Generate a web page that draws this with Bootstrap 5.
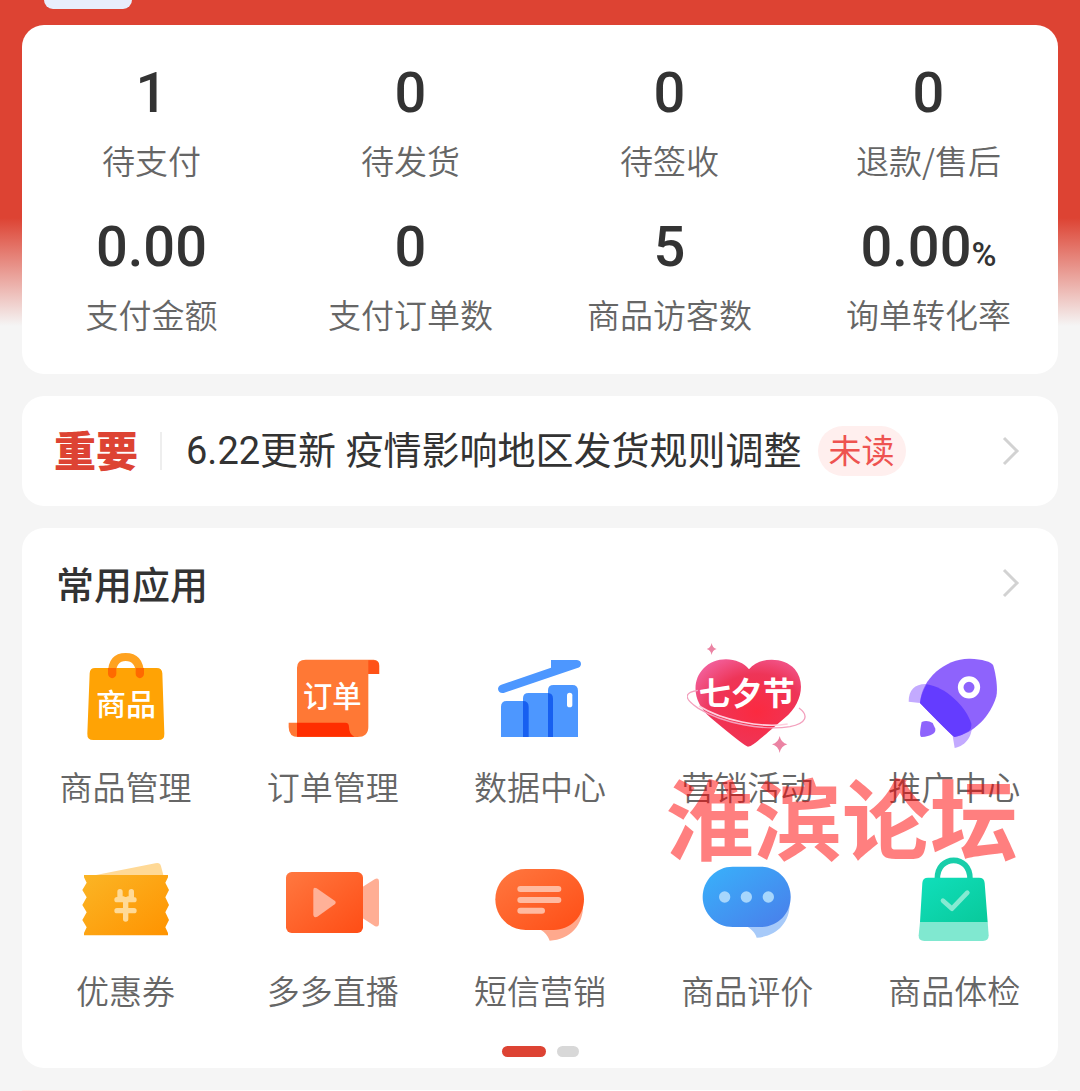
<!DOCTYPE html>
<html lang="zh-CN">
<head>
<meta charset="utf-8">
<meta name="viewport" content="width=device-width, initial-scale=1">
<title>店铺首页</title>
<link href="https://cdn.jsdelivr.net/npm/bootstrap@5.3.0/dist/css/bootstrap.min.css" rel="stylesheet">
<style>
body{font-family:Roboto,"Noto Sans CJK SC",sans-serif;background:#f5f5f5 linear-gradient(#dd4333 0,#dd4333 218px,#f5f5f5 326px) no-repeat;color:#333}
.shop{padding:0 22px;gap:22px}
.top-tab{width:88px;height:9px;margin:0 0 -6px 22px;background:#e8eefc;border-radius:0 0 9px 9px}
.panel{background:#fff;border-radius:22px}
.stats{padding:38px 0;row-gap:35px}
.figure-num{font-family:Roboto,sans-serif;font-size:56px;font-weight:500;line-height:60px;margin-bottom:15px}
.figure-num small{font-size:34px;line-height:34px}
.caption{font-family:"Noto Sans CJK SC",sans-serif;font-size:33px;font-weight:350;line-height:44px;color:#666;white-space:nowrap}
.notice{padding:0 34px 0 32px;height:110px;color:#333}
.key{font:900 42px/46px "Noto Sans CJK SC",sans-serif;color:#dd4333;padding-bottom:4px}
.rule{width:2px;height:38px;background:#eee;margin:0 24px 0 22px}
.headline{font-family:Roboto,"Noto Sans CJK SC",sans-serif;font-size:38px;line-height:46px;white-space:nowrap}
.unread{font:400 33px/46px "Noto Sans CJK SC",sans-serif;background:#ffefee;color:#ee5350;padding:0 11px 4px;margin-left:16px}
.chev{width:30px;height:30px;fill:none;stroke:#d2d2d2;stroke-width:3}
.apps-head{padding:33px 34px 35px 34px}
.apps-head h2{font:500 38px/44px "Noto Sans CJK SC",sans-serif}
.apps{row-gap:36px}
.app-icon{width:120px;height:120px;margin-bottom:4px}
.app-icon text{font-family:"Noto Sans CJK SC",sans-serif;font-weight:500;fill:#fff}
.app-icon .fest{font-weight:700}
.dots{gap:11px;padding:34px 0 11px}
.dots button{width:22px;height:11px;border:0;padding:0;background:#d8d8d8}
.dots .on{width:44px;background:#dd4333}
.stamp{top:243px;right:40px;font:700 88px/88px "Noto Sans CJK SC",sans-serif;color:rgba(255,0,0,.5);pointer-events:none}
.next{border-radius:22px 22px 0 0;min-height:1px;background:linear-gradient(90deg,#ffe9e7,#fff 25%)}
</style>
</head>
<body>
<main class="shop d-flex flex-column min-vh-100">
  <div class="top-tab"></div>

  <section class="panel">
    <div class="row row-cols-4 g-0 stats text-center">
      <div class="col"><div class="figure-num">1</div><div class="caption">待支付</div></div>
      <div class="col"><div class="figure-num">0</div><div class="caption">待发货</div></div>
      <div class="col"><div class="figure-num">0</div><div class="caption">待签收</div></div>
      <div class="col"><div class="figure-num">0</div><div class="caption">退款/售后</div></div>
      <div class="col"><div class="figure-num">0.00</div><div class="caption">支付金额</div></div>
      <div class="col"><div class="figure-num">0</div><div class="caption">支付订单数</div></div>
      <div class="col"><div class="figure-num">5</div><div class="caption">商品访客数</div></div>
      <div class="col"><div class="figure-num">0.00<small>%</small></div><div class="caption">询单转化率</div></div>
    </div>
  </section>

  <a href="#" class="panel notice d-flex align-items-center text-decoration-none">
    <span class="key">重要</span>
    <span class="rule"></span>
    <span class="headline">6.22更新 疫情影响地区发货规则调整</span>
    <span class="unread rounded-pill">未读</span>
    <svg class="chev ms-auto" viewBox="0 0 30 30"><path d="M10 2 23 15 10 28"/></svg>
  </a>

  <section class="panel position-relative">
    <div class="apps-head d-flex align-items-center justify-content-between">
      <h2 class="m-0">常用应用</h2>
      <a href="#" class="d-flex" aria-label="更多"><svg class="chev" viewBox="0 0 30 30"><path d="M10 2 23 15 10 28"/></svg></a>
    </div>
    <div class="row row-cols-5 g-0 apps">
      <a href="#" class="col d-flex flex-column align-items-center text-decoration-none">
        <svg class="app-icon" viewBox="78 15 360 360">
          <path fill="#ffa305" d="M165 99H350Q366 99 367 115L373 296Q374 315 355 315H160Q141 315 142 296L149 115Q150 99 165 99Z"/>
          <path fill="none" stroke="#ffa21f" stroke-width="24" stroke-linecap="round" d="M216 116Q216 66 257 66T300 116"/>
          <path fill="#ff6a00" d="M204 99H229V116A12 13 0 0 1 204 116ZM287 99H312V116A12 13 0 0 1 287 116Z"/>
          <text x="168" y="241" font-size="90">商品</text>
        </svg>
        <span class="caption">商品管理</span>
      </a>
      <a href="#" class="col d-flex flex-column align-items-center text-decoration-none">
        <svg class="app-icon" viewBox="699 15 360 360">
          <path fill="#ff7835" d="M797 74H1001Q1018 75 1018 92V117H985V276Q985 306 952 306H775Q746 306 746 276V263H771V98Q771 74 797 74Z"/>
          <path fill="#ff5216" d="M985 76H1001Q1017 77 1017 92V117H985Z"/>
          <path fill="#ff2e00" d="M771 263H916Q927 263 927 276 927 298 943 305H771Z"/>
          <text x="789" y="216" font-size="88">订单</text>
        </svg>
        <span class="caption">订单管理</span>
      </a>
      <a href="#" class="col d-flex flex-column align-items-center text-decoration-none">
        <svg class="app-icon" viewBox="60 15 360 360">
          <path fill="#4d97ff" d="M123 306V215Q123 198 140 198H189V190Q189 174 206 174H264V166Q264 150 281 150H337Q354 150 354 167V306Z"/>
          <path fill="#175ff0" d="M189 198Q206 198 206 215V306H189ZM264 174Q279 175 279 191V306H264Z"/>
          <rect x="321" y="173" width="16" height="44" rx="8" fill="#fff"/>
          <path fill="#4d97ff" d="M273 75H351Q363 76 363 88 362 97 352 99L131 174Q116 176 114 162 114 153 124 149L273 98Z"/>
        </svg>
        <span class="caption">数据中心</span>
      </a>
      <a href="#" class="col d-flex flex-column align-items-center text-decoration-none">
        <svg class="app-icon" viewBox="681 15 360 360">
          <defs>
            <radialGradient id="heart" cx=".58" cy=".6" r=".72"><stop offset="0" stop-color="#fb2a40"/><stop offset=".6" stop-color="#ee3558"/><stop offset="1" stop-color="#f2609c"/></radialGradient>
          </defs>
          <path fill="url(#heart)" d="M864 335Q852 332 752 248C700 205 692 140 731 100 767 60 840 66 867 103 896 66 970 64 1004 102 1038 142 1025 207 974 249 878 332 876 333 864 335Z"/>
          <path fill="none" stroke="#f3a0bd" stroke-width="4" d="M714 166C674 172 667 188 715 220 790 266 910 287 990 275 1039 265 1048 242 1017 219"/>
          <path fill="none" stroke="#ffd0df" stroke-width="5" d="M717 213C785 256 905 280 983 267"/>
          <path fill="#eb83a3" d="M755 24Q757 39 770 42 757 45 755 60 752 45 740 42 752 39 755 24ZM959 303Q963 323 982 328 963 333 959 354 955 333 936 328 955 323 959 303Z"/>
          <text class="fest" x="716" y="211" font-size="96">七夕节</text>
        </svg>
        <span class="caption">营销活动</span>
      </a>
      <a href="#" class="col d-flex flex-column align-items-center text-decoration-none">
        <svg class="app-icon" viewBox="702 15 360 360">
          <path fill="#c3aaff" d="M746 200C746 166 764 147 797 147 852 152 917 211 935 264 940 301 919 332 884 339L878 303 780 204Z"/>
          <path fill="#8e63fc" d="M780 204C784 130 858 69 930 71 965 73 996 79 1000 92 1008 119 1014 161 1009 184 992 243 941 296 884 306Q878 305 780 204Z"/>
          <path fill="#643cff" d="M780 204Q784 174 800 148C855 155 917 213 934 266 935 276 932 284 926 289Q906 302 884 306 878 305 780 204Z"/>
          <circle cx="927" cy="157" r="25" fill="none" stroke="#fff" stroke-width="17"/>
          <path fill="#8e63fc" d="M785 261Q801 253 818 264L826 281Q829 302 784 306 776 303 785 261Z"/>
        </svg>
        <span class="caption">推广中心</span>
      </a>
      <a href="#" class="col d-flex flex-column align-items-center text-decoration-none">
        <svg class="app-icon" viewBox="78 -18 360 360">
          <defs>
            <linearGradient id="gold" x2="1" y2="1"><stop stop-color="#fbb525"/><stop offset="1" stop-color="#ff9300"/></linearGradient>
            <linearGradient id="flame" x2="1" y2="1"><stop stop-color="#ff7840"/><stop offset="1" stop-color="#ff4d15"/></linearGradient>
            <linearGradient id="sky" x2="1" y2="1"><stop stop-color="#38b2fb"/><stop offset="1" stop-color="#4a7dea"/></linearGradient>
            <linearGradient id="mint" x2="1" y2="1"><stop stop-color="#10dfbb"/><stop offset="1" stop-color="#09c99b"/></linearGradient>
          </defs>
          <path fill="#ffd996" d="M168 75 346 40Q360 36 363 49L370 75Z"/>
          <path fill="url(#gold)" d="M132 75H384V82L376 98 387 120 376 142 387 165 376 187 387 210 376 232 384 249V256H132V249L140 232 127 210 140 187 127 165 140 142 127 120 140 98 132 82Z"/>
          <path fill="none" stroke="#ffda97" stroke-width="16" stroke-linecap="round" stroke-linejoin="round" d="M240 125V145Q257 145 257 158V207M274 125V145Q257 145 257 158M231 149H282M231 182H282"/>
        </svg>
        <span class="caption">优惠券</span>
      </a>
      <a href="#" class="col d-flex flex-column align-items-center text-decoration-none">
        <svg class="app-icon" viewBox="699 -18 360 360">
          <path fill="#ffae94" d="M966 112 1005 87Q1017 82 1017 96V219Q1017 234 1004 228L966 203Z"/>
          <rect x="738" y="66" width="231" height="183" rx="17" fill="url(#flame)"/>
          <path fill="#ffb198" d="M820 120Q820 110 830 115L884 152Q890 157 884 163L832 200Q820 205 820 193Z"/>
        </svg>
        <span class="caption">多多直播</span>
      </a>
      <a href="#" class="col d-flex flex-column align-items-center text-decoration-none">
        <svg class="app-icon" viewBox="60 -18 360 360">
          <path fill="#ffa98d" d="M240 238 306 220 369 165C371 224 330 270 269 272 263 256 254 247 240 238Z"/>
          <path fill="url(#flame)" d="M197 57H281C331 57 372 96 372 148S331 240 281 240H197C147 240 106 200 106 148S147 57 197 57Z"/>
          <path stroke="#ffbaa0" stroke-width="18" stroke-linecap="round" d="M181 117H295M181 150H295M181 182H246"/>
        </svg>
        <span class="caption">短信营销</span>
      </a>
      <a href="#" class="col d-flex flex-column align-items-center text-decoration-none">
        <svg class="app-icon" viewBox="681 -18 360 360">
          <path fill="#a7caf9" d="M862 230 930 210 989 158C991 217 950 260 890 263 885 247 876 239 862 230Z"/>
          <path fill="url(#sky)" d="M818 50H902C952 50 992 90 992 141S952 231 902 231H818C768 231 728 191 728 141S768 50 818 50Z"/>
          <g fill="#a7d6fc"><circle cx="794" cy="141" r="17"/><circle cx="859" cy="141" r="17"/><circle cx="925" cy="141" r="17"/></g>
        </svg>
        <span class="caption">商品评价</span>
      </a>
      <a href="#" class="col d-flex flex-column align-items-center text-decoration-none">
        <svg class="app-icon" viewBox="222 222 360 360">
          <path fill="none" stroke="#18ceaa" stroke-width="17" d="M352 328C350 252 452 252 450 328"/>
          <path fill="url(#mint)" d="M324 323H477Q493 323 494 339L503 457H300L307 339Q308 323 324 323Z"/>
          <path fill="#80e8d0" d="M300 456H503L506 496Q506 513 489 513H313Q295 513 296 496Z"/>
          <path fill="none" stroke="#85ead2" stroke-width="14" stroke-linecap="round" stroke-linejoin="round" d="M369 392 396 416 442 368"/>
        </svg>
        <span class="caption">商品体检</span>
      </a>
    </div>
    <div class="dots d-flex justify-content-center">
      <button type="button" class="on rounded-pill" aria-label="第一页"></button>
      <button type="button" class="rounded-pill" aria-label="第二页"></button>
    </div>
    <div class="stamp position-absolute">淮滨论坛</div>
  </section>

  <section class="next flex-grow-1"></section>
</main>
<script src="https://cdn.jsdelivr.net/npm/bootstrap@5.3.0/dist/js/bootstrap.bundle.min.js"></script>
</body>
</html>
